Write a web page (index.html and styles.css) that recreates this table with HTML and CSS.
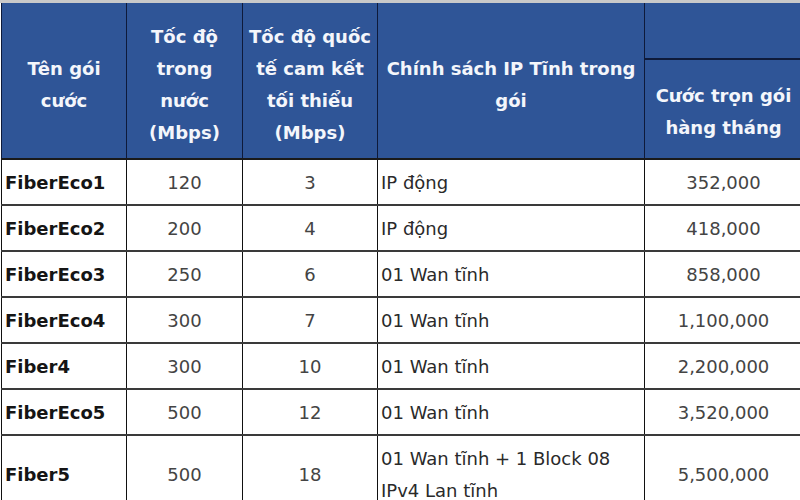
FILE: index.html
```html
<!DOCTYPE html>
<html lang="vi">
<head>
<meta charset="utf-8">
<title>Bảng cước</title>
<link rel="stylesheet" href="styles.css">
</head>
<body>
<div class="wrap">
<table class="price">
  <colgroup>
    <col class="c1"><col class="c2"><col class="c3"><col class="c4"><col class="c5">
  </colgroup>
  <thead>
    <tr class="h1">
      <th rowspan="2" class="tall">Tên gói<br>cước</th>
      <th rowspan="2" class="tall">Tốc độ<br>trong<br>nước<br>(Mbps)</th>
      <th rowspan="2" class="tall">Tốc độ quốc<br>tế cam kết<br>tối thiểu<br>(Mbps)</th>
      <th rowspan="2" class="tall">Chính sách IP Tĩnh trong<br>gói</th>
      <th class="empty"></th>
    </tr>
    <tr class="h2">
      <th>Cước trọn gói<br>hàng tháng</th>
    </tr>
  </thead>
  <tbody>
    <tr><td class="name">FiberEco1</td><td class="num">120</td><td class="num">3</td><td class="pol">IP động</td><td class="num">352,000</td></tr>
    <tr><td class="name">FiberEco2</td><td class="num">200</td><td class="num">4</td><td class="pol">IP động</td><td class="num">418,000</td></tr>
    <tr><td class="name">FiberEco3</td><td class="num">250</td><td class="num">6</td><td class="pol">01 Wan tĩnh</td><td class="num">858,000</td></tr>
    <tr><td class="name">FiberEco4</td><td class="num">300</td><td class="num">7</td><td class="pol">01 Wan tĩnh</td><td class="num">1,100,000</td></tr>
    <tr><td class="name">Fiber4</td><td class="num">300</td><td class="num">10</td><td class="pol">01 Wan tĩnh</td><td class="num">2,200,000</td></tr>
    <tr><td class="name">FiberEco5</td><td class="num">500</td><td class="num">12</td><td class="pol">01 Wan tĩnh</td><td class="num">3,520,000</td></tr>
    <tr><td class="name">Fiber5</td><td class="num">500</td><td class="num">18</td><td class="pol">01 Wan tĩnh + 1 Block 08<br>IPv4 Lan tĩnh</td><td class="num">5,500,000</td></tr>
  </tbody>
</table>
</div>
</body>
</html>
```
FILE: styles.css
```css
html, body {
  margin: 0;
  padding: 0;
  background: #ffffff;
  overflow: hidden;
  width: 800px;
  height: 500px;
}
.wrap {
  border-top: 3px solid #c9c9c9;
  padding-left: 1px;
}
.price {
  border-collapse: collapse;
  table-layout: fixed;
  width: 801px;
  font-family: "DejaVu Sans", Verdana, sans-serif;
  font-size: 18px;
  line-height: 32px;
}
.c1 { width: 125px; }
.c2 { width: 116px; }
.c3 { width: 135px; }
.c4 { width: 267px; }
.c5 { width: 158px; }
.price th {
  background: #2f5597;
  color: #f4f6fb;
  font-weight: bold;
  text-align: center;
  vertical-align: middle;
  padding: 0 3px;
  border: 1px solid #0e1a3a;
  border-top: none;
}
.price th.tall { padding-top: 8px; }
.price .h1 th.empty { height: 55px; border-bottom: 2px solid #0e1a3a; }
.price .h2 th { height: 92px; padding-top: 6px; }
.price td {
  border-left: 1px solid #111111;
  border-right: 1px solid #111111;
  border-top: 2px solid #3a3a3a;
  border-bottom: 2px solid #3a3a3a;
  padding: 7px 3px 5px 3px;
  height: 32px;
  vertical-align: middle;
  color: #333333;
}
.price tbody tr:first-child td { border-top: 2px solid #1a1a1a; }
.price td.name {
  font-weight: bold;
  color: #151515;
}
.price td.num {
  text-align: center;
  color: #444444;
}
.price td.pol {
  text-align: left;
  color: #2a2a2a;
}
```
